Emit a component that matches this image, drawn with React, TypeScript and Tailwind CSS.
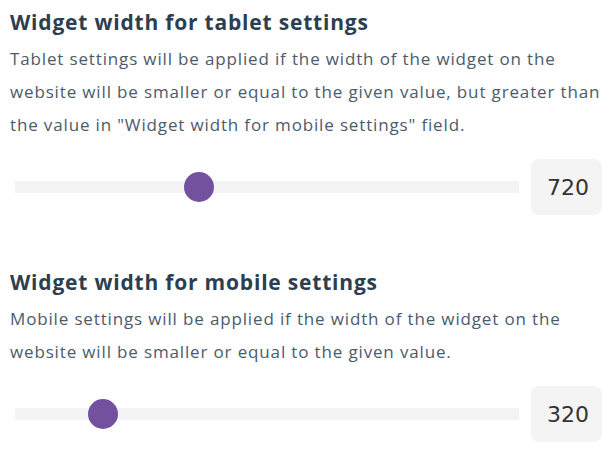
import React from "react";

function WidthSlider({ value, percent }: { value: number; percent: number }) {
  return (
    <div className="flex items-center gap-3 pl-[5px]">
      <div className="relative h-3 flex-1 bg-[#f3f3f3]">
        <div
          className="absolute top-1/2 h-[30px] w-[30px] -translate-x-1/2 -translate-y-1/2 rounded-full bg-[#74519f]"
          style={{ left: `${percent}%` }}
        />
      </div>
      <div className="flex h-14 w-[71px] items-center justify-end rounded-lg bg-[#f4f4f4] pr-[13px] font-['DejaVu_Sans',sans-serif] text-[22px] text-[#333]">
        {value}
      </div>
    </div>
  );
}

function Section({
  title,
  children,
  value,
  percent,
}: {
  title: string;
  children: React.ReactNode;
  value: number;
  percent: number;
}) {
  return (
    <section>
      <h2 className="text-[21px] leading-[30px] font-bold tracking-[0.8px] text-[#2c3e50]">
        {title}
      </h2>
      <p className="mt-[5px] mr-[-12px] text-[17px] leading-[33px] tracking-[0.85px] text-[#4b5b6b]">
        {children}
      </p>
      <div className="mt-[18px]">
        <WidthSlider value={value} percent={percent} />
      </div>
    </section>
  );
}

export default function App() {
  return (
    <div className="flex w-[615px] flex-col gap-[52px] bg-white pt-[7px] pr-[13px] pl-[10px] font-['Open_Sans',sans-serif]">
      <Section title="Widget width for tablet settings" value={720} percent={36.6}>
        Tablet settings will be applied if the width of the widget on the website will be
        smaller or equal to the given value, but greater than the value in "Widget width for
        mobile settings" field.
      </Section>
      <Section title="Widget width for mobile settings" value={320} percent={17.5}>
        Mobile settings will be applied if the width of the widget on the website will be
        smaller or equal to the given value.
      </Section>
    </div>
  );
}
